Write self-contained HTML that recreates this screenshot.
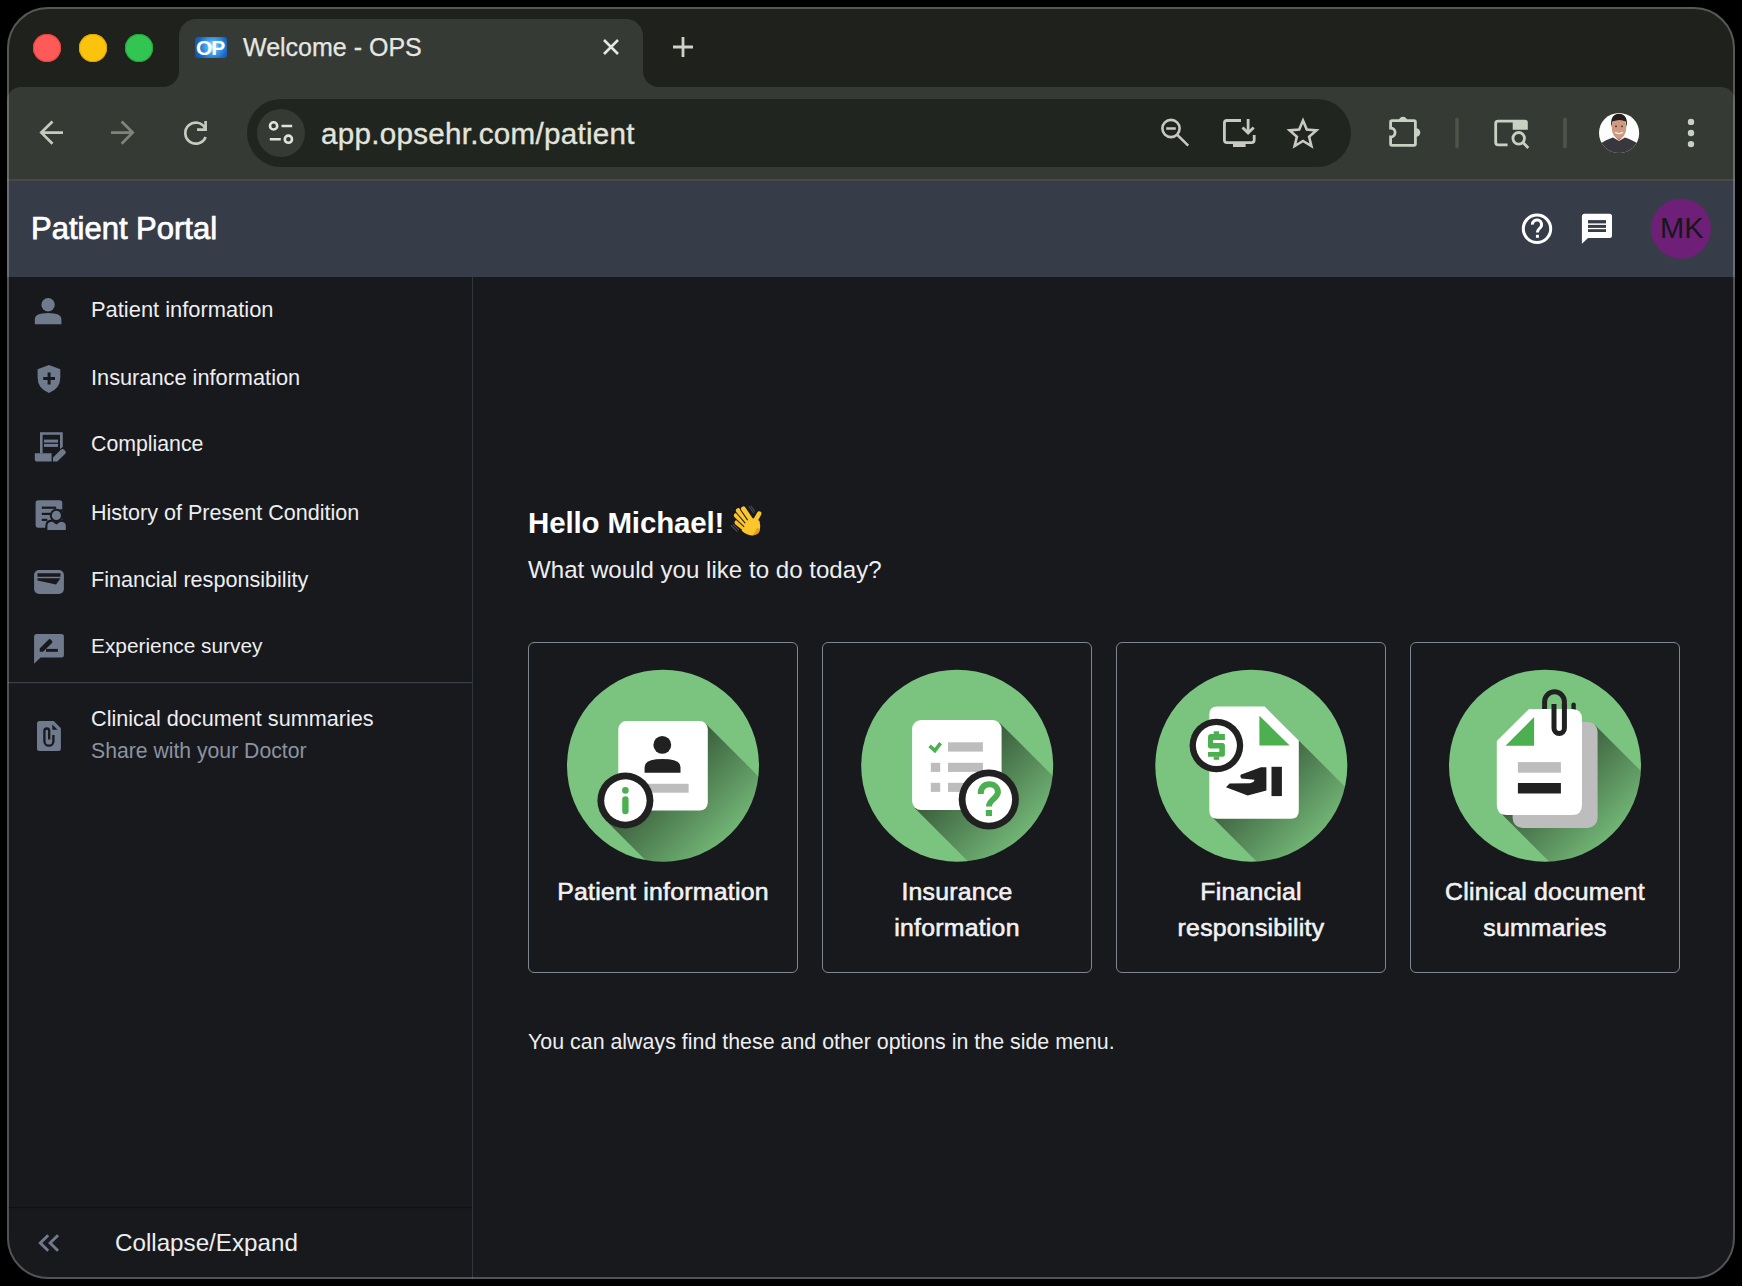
<!DOCTYPE html>
<html><head><meta charset="utf-8">
<style>
*{box-sizing:border-box;margin:0;padding:0}
html,body{width:1742px;height:1286px;background:#000;overflow:hidden;font-family:"Liberation Sans",sans-serif}
#win{position:absolute;left:7px;top:7px;width:1728px;height:1272px;border-radius:41px;background:#1e211c;overflow:hidden}
#pg{position:absolute;left:-7px;top:-7px;width:1742px;height:1286px}
#frame{position:absolute;left:7px;top:7px;width:1728px;height:1272px;border-radius:41px;border:2px solid rgba(255,255,255,0.25);pointer-events:none}
.a{position:absolute}
.light{position:absolute;top:34px;width:28px;height:28px;border-radius:50%}
.t{position:absolute;white-space:nowrap;line-height:1}
svg.ov{position:absolute;left:0;top:0}
.card{position:absolute;top:642px;width:270px;height:331px;border:1px solid #7f8591;border-radius:6px}
.lbl{position:absolute;width:270px;text-align:center;font-size:24.8px;font-weight:400;line-height:36px;color:#f2f2f2;white-space:nowrap;-webkit-text-stroke:0.6px #f2f2f2;letter-spacing:0.25px}
</style></head><body>
<div id="win"><div id="pg">
  <!-- tab -->
  <div class="a" style="left:163px;top:70px;width:496px;height:20px;background:#363a34"></div>
  <div class="a" style="left:147px;top:55px;width:32px;height:32px;background:#1e211c;border-radius:0 0 16px 0"></div>
  <div class="a" style="left:643px;top:55px;width:32px;height:32px;background:#1e211c;border-radius:0 0 0 16px"></div>
  <div class="light" style="left:33px;background:#ff5a58;box-shadow:inset 0 0 0 1px #e5443f"></div>
  <div class="light" style="left:79px;background:#fcc30c;box-shadow:inset 0 0 0 1px #dea40a"></div>
  <div class="light" style="left:125px;background:#33c552;box-shadow:inset 0 0 0 1px #22a83a"></div>
  <div class="a" id="tab" style="left:179px;top:19px;width:464px;height:75px;background:#363a34;border-radius:17px 17px 0 0"></div>
  <div class="a" id="toolbar" style="left:7px;top:87px;width:1728px;height:93px;background:#363a34;border-radius:14px 14px 0 0"></div>
  <div class="a" id="omni" style="left:247px;top:99px;width:1104px;height:68px;background:#21251f;border-radius:34px"></div>
  <div class="a" style="left:257px;top:109px;width:48px;height:48px;background:#363a34;border-radius:50%"></div>
  <div class="a" style="left:0;top:179px;width:1742px;height:2px;background:#4a4946"></div>
  <div class="a" id="header" style="left:0;top:181px;width:1742px;height:96px;background:#373c49"></div>
  <div class="a" id="side" style="left:0;top:277px;width:473px;height:1010px;background:#18191d;border-right:1px solid #30343c"></div>
  <div class="a" id="main" style="left:473px;top:277px;width:1270px;height:1010px;background:#18191d"></div>

  <!-- favicon -->
  <div class="a" style="left:195px;top:37px;width:32px;height:21px;border-radius:3px;background:radial-gradient(circle at 55% 45%,#bfe6ff 0,#4aa8ee 30%,#1766c2 70%,#0d4f9e 100%)"></div>
  <div class="t" style="left:196px;top:37px;font-size:21px;font-weight:700;color:#fff;letter-spacing:-1px">OP</div>
  <div class="t" style="left:243px;top:35px;font-size:25px;color:#e6e7e2;-webkit-text-stroke:0.25px #e6e7e2">Welcome - OPS</div>
  <div class="t" style="left:321px;top:118.5px;font-size:29.6px;color:#e2e4dd;letter-spacing:0.28px;-webkit-text-stroke:0.35px #e2e4dd">app.opsehr.com/patient</div>

  <svg class="ov" width="1742" height="286" viewBox="0 0 1742 286">
    <g fill="none" stroke="#e6e7e2" stroke-width="2.6" stroke-linecap="butt">
      <path d="M604 40 L618 54 M618 40 L604 54"/>
    </g>
    <g fill="none" stroke="#cdd3c8" stroke-width="2.8">
      <path d="M673 47 H693 M683 37 V57"/>
    </g>
    <!-- back -->
    <g fill="none" stroke="#c5cbbd" stroke-width="2.7">
      <path d="M63 132.6 H41 M52.5 121.5 L41.3 132.6 L52.5 143.8"/>
    </g>
    <g fill="none" stroke="#80857c" stroke-width="2.7">
      <path d="M111 132.6 H133 M121.6 121.5 L132.7 132.6 L121.6 143.8"/>
    </g>
    <!-- reload -->
    <g fill="none" stroke="#c5cbbd" stroke-width="2.7">
      <path d="M205 128 A10.5 10.5 0 1 0 205.6 137"/>
      <path d="M205.6 121 V129.6 H197"/>
    </g>
    <!-- tune -->
    <g fill="none" stroke="#dfe3da" stroke-width="2.6">
      <circle cx="273.6" cy="125.9" r="3.6"/>
      <circle cx="288.4" cy="139.2" r="3.6"/>
      <path d="M281.5 126 H292.2 M269.8 139.2 H280.8"/>
    </g>
    <!-- zoom -->
    <g fill="none" stroke="#c8c9c3" stroke-width="2.6">
      <circle cx="1171" cy="128.5" r="8.6"/>
      <path d="M1177.3 134.8 L1188.2 145.7"/>
      <path d="M1166.2 128.5 H1175.8"/>
    </g>
    <!-- install -->
    <g fill="none" stroke="#c8c9c3" stroke-width="2.8">
      <path d="M1241 120.5 H1227 Q1224.4 120.5 1224.4 123.1 V140 Q1224.4 142.6 1227 142.6 H1251.5 Q1254.2 142.6 1254.2 140 V135"/>
      <path d="M1248.1 119 V133 M1242.5 127.5 L1248.1 133 L1253.7 127.5"/>
    </g>
    <rect x="1233" y="142" width="12.6" height="5" fill="#c8c9c3"/>
    <!-- star -->
    <path d="M1303 120.6 L1306.8 129.6 L1316.4 130.4 L1309.1 136.7 L1311.4 146 L1303 141 L1294.6 146 L1296.9 136.7 L1289.6 130.4 L1299.2 129.6 Z" fill="none" stroke="#c8c9c3" stroke-width="2.6" stroke-linejoin="miter"/>
    <!-- puzzle -->
    <path d="M1392 120.6 H1414 Q1415.4 120.6 1415.4 122 V144 Q1415.4 145.4 1414 145.4 H1392 Q1390.6 145.4 1390.6 144 V137 A4.5 4.5 0 0 0 1390.6 128 V122 Q1390.6 120.6 1392 120.6 Z" fill="none" stroke="#c8d0c4" stroke-width="2.8"/>
    <path d="M1398.7 121 A4.3 4.3 0 0 1 1407.3 121 Z" fill="#c8d0c4"/>
    <path d="M1416 128.2 A4.3 4.3 0 0 1 1416 136.8 Z" fill="#c8d0c4"/>
    <rect x="1455.2" y="117.4" width="3.6" height="31.2" rx="1.8" fill="#4e534b"/>
    <rect x="1563.2" y="117.4" width="3.6" height="31.2" rx="1.8" fill="#4e534b"/>
    <!-- tab search -->
    <path d="M1507.6 144.9 H1498 Q1495.7 144.9 1495.7 142.6 V123.4 Q1495.7 121.1 1498 121.1 H1513" fill="none" stroke="#c8d0c4" stroke-width="2.8"/>
    <path d="M1512.7 119.7 H1525 Q1527.8 119.7 1527.8 122.5 V129.8 H1512.7 Z" fill="#c8d0c4"/>
    <circle cx="1518.7" cy="138.3" r="5.8" fill="none" stroke="#c8d0c4" stroke-width="2.8"/>
    <path d="M1522.9 142.5 L1528.3 147.9" stroke="#c8d0c4" stroke-width="2.8"/>
    <!-- avatar -->
    <clipPath id="avc"><circle cx="1619.1" cy="133" r="20.1"/></clipPath>
    <g clip-path="url(#avc)">
      <rect x="1598" y="112" width="42" height="42" fill="#fdfdfd"/>
      <path d="M1594 156 L1598 145 Q1606 139.5 1613 137.5 L1619 141 L1625 137.5 Q1632 139.5 1640 145 L1644 156 Z" fill="#38373d"/>
      <path d="M1613.5 135 L1619 141 L1624.5 135 Z" fill="#b98068"/>
      <ellipse cx="1619" cy="127.8" rx="7.3" ry="10.6" fill="#cf9a80"/>
      <path d="M1611.3 127 Q1609.8 114 1619 113.8 Q1628.2 114 1626.8 127 L1625.6 121.5 Q1620 118.5 1612.5 121.5 Z" fill="#231e1c"/>
      <path d="M1615 132.3 Q1619 134.8 1623 132.3" fill="none" stroke="#f4eee8" stroke-width="1.3"/>
      <g fill="#3a2a24"><circle cx="1616" cy="126.3" r="0.9"/><circle cx="1622" cy="126.3" r="0.9"/></g>
    </g>
    <g fill="#c8d0c4"><circle cx="1691" cy="121.9" r="3.2"/><circle cx="1691" cy="133" r="3.2"/><circle cx="1691" cy="144.1" r="3.2"/></g>
  </svg>

  <div class="t" style="left:31px;top:213px;font-size:31px;font-weight:400;color:#fff;letter-spacing:0px;-webkit-text-stroke:0.75px #fff">Patient Portal</div>
  <svg class="ov" width="1742" height="1286" viewBox="0 0 1742 1286">
    <!-- help -->
    <circle cx="1537" cy="228.8" r="13.7" fill="none" stroke="#fff" stroke-width="3"/>
    <path d="M1532.4 224.6 A4.6 4.6 0 1 1 1540.5 227.5 C1538.6 229.3 1537.4 229.9 1537.4 232.6" fill="none" stroke="#fff" stroke-width="3"/>
    <rect x="1535.9" y="234.8" width="3" height="3" fill="#fff"/>
    <!-- chat -->
    <path d="M1584.5 213.8 H1609.5 Q1612 213.8 1612 216.3 V235.4 Q1612 237.9 1609.5 237.9 H1588 L1581.9 243.7 V216.3 Q1581.9 213.8 1584.5 213.8 Z" fill="#fff"/>
    <g fill="#373c49"><rect x="1588" y="220.1" width="18" height="3.3"/><rect x="1588" y="224.9" width="18" height="3"/><rect x="1588" y="229.2" width="18" height="2.8"/></g>
    <circle cx="1681" cy="228.8" r="30" fill="#6e1f78"/>

    <!-- sidebar icons -->
    <g fill="#6f7b8d">
      <circle cx="48.1" cy="304.7" r="6.7"/>
      <path d="M34.8 324.3 V319.5 Q34.8 313.1 48.1 313.1 Q61.4 313.1 61.4 319.5 V324.3 Z"/>
      <path d="M49 364.9 L60.3 369.3 V377.5 Q60.3 388.5 49 393 Q37.6 388.5 37.6 377.5 V369.3 Z"/>
    </g>
    <path d="M49.1 372.6 V384.4 M43.2 378.5 H55" stroke="#18191d" stroke-width="3"/>
    <!-- compliance -->
    <g fill="#6f7b8d">
      <path d="M40 432.2 H62.8 V447 L60 449 V434.8 H42.6 V453.2 H40 Z"/>
      <rect x="44" y="439.6" width="14" height="3"/>
      <rect x="44" y="443.9" width="14" height="3"/>
      <path d="M34.8 453.2 H51.6 L51.6 461.6 H37.3 Q34.8 461.6 34.8 459 Z"/>
      <path d="M53 461.6 V457.5 L61 449.6 Q62.5 448.2 64 449.6 L65.3 450.9 Q66.6 452.3 65.2 453.7 L57.3 461.6 Z"/>
    </g>
    <!-- history -->
    <rect x="35.6" y="500.3" width="26.7" height="27.4" rx="2.6" fill="#6f7b8d"/>
    <g fill="#18191d">
      <rect x="41.8" y="506.6" width="14.3" height="2.2"/>
      <rect x="41.8" y="512.8" width="8.3" height="2.2"/>
      <rect x="41.8" y="518.8" width="5.5" height="2.2"/>
      <circle cx="56.4" cy="515.4" r="6.6"/>
      <path d="M45.2 532 V526.5 Q45.2 519.5 51.8 519.5 L56.4 522 L61 519.5 Q68 519.5 68 526.5 V532 Z"/>
      <path d="M52 511 L62.5 509 V519 H52 Z"/>
    </g>
    <g fill="#6f7b8d">
      <circle cx="56.4" cy="515.4" r="4.6"/>
      <path d="M47.4 530.1 V525.5 Q47.4 521.7 52.4 521.7 L56.4 524.4 L60.4 521.7 Q65.8 521.7 65.8 525.5 V530.1 Z"/>
    </g>
    <!-- financial -->
    <rect x="34.1" y="570.1" width="29.8" height="23.8" rx="5" fill="#6f7b8d"/>
    <path d="M37.5 573.3 H60.5 V576.8 H37.5 Z M37.5 578.2 H60.5 L56 584.5 L37.5 580.5 Z" fill="#18191d"/>
    <!-- survey -->
    <path d="M36.6 634 H61.4 Q63.9 634 63.9 636.5 V654.9 Q63.9 657.4 61.4 657.4 H40.6 L34.1 663.7 V636.5 Q34.1 634 36.6 634 Z" fill="#6f7b8d"/>
    <path d="M39.7 651.8 V648.4 L48.6 639.5 Q49.6 638.5 50.6 639.5 L52 640.9 Q53 641.9 52 642.9 L43.1 651.8 Z" fill="#18191d"/>
    <rect x="46" y="648.9" width="11.9" height="2.9" fill="#18191d"/>
    <!-- clinical -->
    <path d="M39.5 720.9 H53.7 L60.9 728.3 V748.4 Q60.9 750.9 58.4 750.9 H39.5 Q37 750.9 37 748.4 V723.4 Q37 720.9 39.5 720.9 Z" fill="#6f7b8d"/>
    <path d="M52.3 724.4 V729.7 H57.6 Z" fill="#18191d"/>
    <path d="M49.2 739.5 V730.9 A2.4 2.4 0 0 0 44.4 730.9 V741.2 A4.5 4.5 0 0 0 53.4 741.2 V735" fill="none" stroke="#18191d" stroke-width="2.3"/>
    <!-- dividers -->
    <rect x="8" y="682" width="464" height="1.2" fill="#3a3f4a"/>
    <rect x="8" y="1207" width="464" height="1.2" fill="#0f1013"/>
    <path d="M48.2 1235.2 L40.3 1243 L48.2 1250.8 M58 1235.2 L50.1 1243 L58 1250.8" fill="none" stroke="#6f7a8c" stroke-width="2.9"/>
  </svg>
  <div class="t" style="left:1660px;top:214px;font-size:29px;color:#16171b">MK</div>
  <div class="t" style="left:91px;top:298.5px;font-size:21.9px;color:#eceef0">Patient information</div>
  <div class="t" style="left:91px;top:366.6px;font-size:21.75px;color:#eceef0">Insurance information</div>
  <div class="t" style="left:91px;top:433.5px;font-size:21.3px;color:#eceef0">Compliance</div>
  <div class="t" style="left:91px;top:501.8px;font-size:21.55px;color:#eceef0">History of Present Condition</div>
  <div class="t" style="left:91px;top:568.8px;font-size:21.6px;color:#eceef0">Financial responsibility</div>
  <div class="t" style="left:91px;top:636.3px;font-size:20.85px;color:#eceef0">Experience survey</div>
  <div class="t" style="left:91px;top:707.5px;font-size:21.65px;color:#eceef0">Clinical document summaries</div>
  <div class="t" style="left:91px;top:740px;font-size:21.2px;color:#8b93a1">Share with your Doctor</div>
  <div class="t" style="left:115px;top:1230.5px;font-size:24.2px;color:#eceef0">Collapse/Expand</div>

  <div class="t" style="left:528px;top:507.5px;font-size:29.5px;font-weight:700;color:#fff;letter-spacing:-0.15px">Hello Michael!</div>
  <div class="t" style="left:528px;top:557.5px;font-size:24.1px;color:#eceef0">What would you like to do today?</div>
  <div class="t" style="left:528px;top:1032px;font-size:21.4px;color:#eceef0">You can always find these and other options in the side menu.</div>

  <svg class="ov" width="1742" height="1286" viewBox="0 0 1742 1286">
    <g stroke="#4b4b4d" stroke-width="1.1" fill="none" stroke-linecap="round">
      <path d="M731.3 525.5 L737 531.3 M733.5 524.6 L738.6 529.7"/>
      <path d="M748.9 506.6 L753.8 513 M751 506.1 L754.6 511.1"/>
    </g>
    <g stroke-linecap="round">
      <path d="M736.9 522.6 L746 529.8" stroke="#18191d" stroke-width="6.8"/><path d="M736.9 522.6 L746 529.8" stroke="#f9c02a" stroke-width="4.8"/>
      <path d="M736.2 515.5 L746.5 525" stroke="#18191d" stroke-width="6.8"/><path d="M736.2 515.5 L746.5 525" stroke="#fbc52e" stroke-width="4.8"/>
      <path d="M738.3 510.6 L748 522" stroke="#18191d" stroke-width="6.8"/><path d="M738.3 510.6 L748 522" stroke="#fbc52e" stroke-width="4.8"/>
      <path d="M743.4 508.9 L751 520" stroke="#18191d" stroke-width="6.8"/><path d="M743.4 508.9 L751 520" stroke="#fbc52e" stroke-width="4.8"/>
      <path d="M759.2 513.6 L755 521" stroke="#fbc52e" stroke-width="4.6"/>
    </g>
    <path d="M744 528 Q745 519 752 518.5 Q757 518 759.5 521 Q761 526 759.6 531 Q757.5 535.5 752 535.4 Q746 535 741.5 530.5 Z" fill="#fbc52e"/>
    <path d="M759.6 529 Q758.5 534.5 752 535.4 Q755.5 533 757 528 Z" fill="#e89a12"/>
  </svg>
<!--CARDS-->
<div class="card" style="left:528px"></div>
<div class="card" style="left:822px"></div>
<div class="card" style="left:1116px"></div>
<div class="card" style="left:1410px"></div>
<svg class="ov" width="1742" height="1286" viewBox="0 0 1742 1286">
<defs>
<clipPath id="cc0"><circle cx="663" cy="765.7" r="96"/></clipPath>
<linearGradient id="sg0" gradientUnits="userSpaceOnUse" x1="656.0" y1="758.7" x2="743.0" y2="845.7"><stop offset="0" stop-color="#000" stop-opacity="0.58"/><stop offset="1" stop-color="#000" stop-opacity="0"/></linearGradient>
<clipPath id="cc1"><circle cx="957.2" cy="765.7" r="96"/></clipPath>
<linearGradient id="sg1" gradientUnits="userSpaceOnUse" x1="950.2" y1="758.7" x2="1037.2" y2="845.7"><stop offset="0" stop-color="#000" stop-opacity="0.58"/><stop offset="1" stop-color="#000" stop-opacity="0"/></linearGradient>
<clipPath id="cc2"><circle cx="1251.3" cy="765.7" r="96"/></clipPath>
<linearGradient id="sg2" gradientUnits="userSpaceOnUse" x1="1244.3" y1="758.7" x2="1331.3" y2="845.7"><stop offset="0" stop-color="#000" stop-opacity="0.58"/><stop offset="1" stop-color="#000" stop-opacity="0"/></linearGradient>
<clipPath id="cc3"><circle cx="1545" cy="765.7" r="96"/></clipPath>
<linearGradient id="sg3" gradientUnits="userSpaceOnUse" x1="1538.0" y1="758.7" x2="1625.0" y2="845.7"><stop offset="0" stop-color="#000" stop-opacity="0.58"/><stop offset="1" stop-color="#000" stop-opacity="0"/></linearGradient>
</defs>
<circle cx="663" cy="765.7" r="96" fill="#7bc47f"/>
<circle cx="957.2" cy="765.7" r="96" fill="#7bc47f"/>
<circle cx="1251.3" cy="765.7" r="96" fill="#7bc47f"/>
<circle cx="1545" cy="765.7" r="96" fill="#7bc47f"/>
<g clip-path="url(#cc0)" fill="url(#sg0)"><path d="M620.6 808.3 L705.5 723.4 L1005.5 1023.4 L1007.8 1110.6 L920.6 1108.3 Z M645.2 780.7 L945.2 1080.7 L905.6 1120.3 L605.6 820.3 Z" fill-rule="nonzero"/></g>
<rect x="618.3" y="721.1" width="89.5" height="89.5" rx="8" fill="#fff"/>
<circle cx="662.3" cy="744.9" r="8.9" fill="#212121"/>
<path d="M644.6 772.7 V767 Q644.6 759 662.5 759 Q680.5 759 680.5 767 V772.7 Z" fill="#212121"/>
<rect x="645" y="783.8" width="43.6" height="8.9" fill="#bdbdbd"/>
<circle cx="625.4" cy="800.5" r="28" fill="#212121"/>
<circle cx="625.4" cy="800.5" r="21.2" fill="#fff"/>
<circle cx="625.4" cy="790.4" r="3.3" fill="#4caf50"/>
<path d="M625.4 799.5 V811" stroke="#4caf50" stroke-width="6.4" stroke-linecap="round"/>
<g clip-path="url(#cc1)" fill="url(#sg1)"><path d="M914.4 807.8 L999.3 722.4 L1299.3 1022.4 L1301.6 1110.1 L1214.4 1107.8 Z M1010.1 778.2 L1310.1 1078.2 L1267.5 1120.8 L967.5 820.8 Z"/></g>
<rect x="912.1" y="720.1" width="89.5" height="90" rx="9" fill="#fff"/>
<path d="M929.6 745.8 L934.9 750.6 L940.6 743.2" fill="none" stroke="#4caf50" stroke-width="3.6"/>
<g fill="#bdbdbd"><rect x="948" y="742.3" width="34.9" height="9.3"/><rect x="948" y="762.8" width="34.9" height="9.1"/><rect x="948" y="782.8" width="34.9" height="9.1"/>
<rect x="930.8" y="762.8" width="9.4" height="9.1"/><rect x="930.8" y="782.8" width="9.4" height="9.1"/></g>
<circle cx="988.8" cy="799.5" r="30.1" fill="#212121"/>
<circle cx="988.8" cy="799.5" r="23.3" fill="#fff"/>
<path d="M980.7 794 C980.7 787.5 984.5 784.3 989.4 784.3 C994.6 784.3 997.9 787.8 997.9 792.3 C997.9 798 988.9 800 988.9 806.6" fill="none" stroke="#4caf50" stroke-width="6"/>
<rect x="985.8" y="810" width="6.2" height="6.1" fill="#4caf50"/>
<g clip-path="url(#cc2)" fill="url(#sg2)"><path d="M1211.6 816.5 L1264.9 706.6 L1564.9 1006.6 L1598.8 1040.5 L1598.8 1118.8 L1511.6 1116.5 Z"/></g>
<path d="M1217.3 706.6 H1264.9 L1298.8 740.5 V810.8 Q1298.8 818.8 1290.8 818.8 H1217.3 Q1209.3 818.8 1209.3 810.8 V714.6 Q1209.3 706.6 1217.3 706.6 Z" fill="#fff"/>
<path d="M1259.4 715.7 V745.5 H1289.7 Z" fill="#4caf50"/>
<circle cx="1216.4" cy="745.5" r="26.8" fill="#212121"/>
<circle cx="1216.4" cy="745.5" r="20.5" fill="#fff"/>
<g fill="#4caf50"><rect x="1213.7" y="731.3" width="5.4" height="3.2"/><path d="M1211 734.1 H1224.9 V739.9 H1213.1 V743.1 H1222.4 Q1224.9 743.1 1224.9 745.6 V754.3 Q1224.9 756.8 1222.4 756.8 H1208 V751.9 H1219.3 V748.4 H1210.5 Q1208 748.4 1208 745.9 V737.1 Q1208 734.1 1211 734.1 Z"/><rect x="1213.7" y="756.6" width="5.4" height="3.2"/></g>
<path d="M1226 787.3 L1229.6 783.6 L1250 783.2 Q1254.8 782 1254.4 779.8 L1241.5 778.6 Q1239.6 776.6 1240.6 774.8 L1260.9 767.3 H1266.4 V790.5 L1247.7 795.6 Z" fill="#212121"/>
<rect x="1271.5" y="766.8" width="10.4" height="29.3" fill="#212121"/>
<g clip-path="url(#cc3)" fill="url(#sg3)"><path d="M1515.5 825.1 L1594.7 724.8 L1894.7 1024.8 L1897.6 1128.0 L1815.5 1125.1 Z M1499.7 812.1 L1582.0 724.0 L1882.0 1024.0 L1882.0 1115.0 L1799.7 1112.1 Z"/></g>
<rect x="1512.6" y="721.9" width="85" height="106.1" rx="10" fill="#bdbdbd"/>
<rect x="1571.4" y="702.4" width="4.4" height="10" rx="2.2" fill="#212121"/>
<path d="M1544.6 712 V701.7 A9.9 9.9 0 0 1 1564.4 701.7 V712" fill="none" stroke="#212121" stroke-width="5"/>
<path d="M1529.1 708.9 H1572 Q1582 708.9 1582 718.9 V805 Q1582 815 1572 815 H1506.8 Q1496.8 815 1496.8 805 V741 Z" fill="#fff"/>
<path d="M1505.5 745.7 L1534.1 717.1 V745.7 Z" fill="#4caf50"/>
<rect x="1517.9" y="762.1" width="43" height="10.6" fill="#bdbdbd"/>
<rect x="1517.9" y="783" width="43" height="10.5" fill="#212121"/>
<path d="M1564.4 704 V728.3 A5.2 5.2 0 0 1 1554 728.3 V704" fill="none" stroke="#212121" stroke-width="5"/>
</svg>
<div class="lbl" style="left:528px;top:874px">Patient information</div>
<div class="lbl" style="left:822px;top:874px">Insurance<br>information</div>
<div class="lbl" style="left:1116px;top:874px">Financial<br>responsibility</div>
<div class="lbl" style="left:1410px;top:874px">Clinical document<br>summaries</div>
<!--/CARDS-->
</div></div>
<div id="frame"></div>
</body></html>
